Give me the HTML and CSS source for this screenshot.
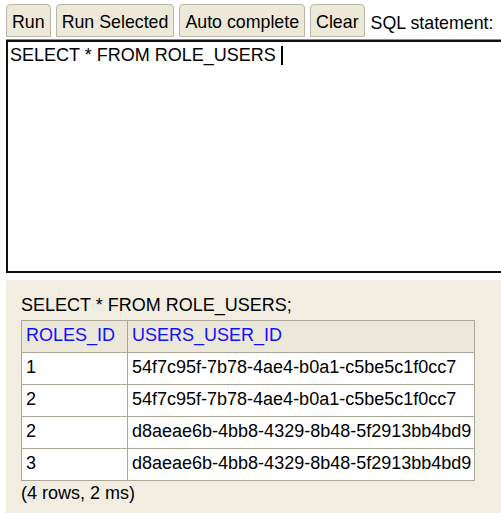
FILE: index.html
```html
<!DOCTYPE html>
<html>
<head>
<meta charset="utf-8">
<link rel="stylesheet" href="styles.css">
</head>
<body>
<div class="page">
  <div class="toolbar">
    <button class="btn">Run</button>
    <button class="btn">Run Selected</button>
    <button class="btn">Auto complete</button>
    <button class="btn">Clear</button>
    <span class="label">SQL statement:</span>
  </div>
  <div class="editor">SELECT * FROM ROLE_USERS <span class="caret"></span></div>
  <div class="result">
    <div class="stmt">SELECT * FROM ROLE_USERS;</div>
    <table class="grid">
      <tr><th class="c1">ROLES_ID</th><th>USERS_USER_ID</th></tr>
      <tr><td>1</td><td>54f7c95f-7b78-4ae4-b0a1-c5be5c1f0cc7</td></tr>
      <tr><td>2</td><td>54f7c95f-7b78-4ae4-b0a1-c5be5c1f0cc7</td></tr>
      <tr><td>2</td><td>d8aeae6b-4bb8-4329-8b48-5f2913bb4bd9</td></tr>
      <tr><td>3</td><td>d8aeae6b-4bb8-4329-8b48-5f2913bb4bd9</td></tr>
    </table>
    <div class="stats">(4 rows, 2 ms)</div>
  </div>
</div>
</body>
</html>
```

FILE: styles.css
```css
html, body {
  margin: 0;
  padding: 0;
  background: #ffffff;
  overflow: hidden;
}
body {
  font-family: "Liberation Sans", Arial, sans-serif;
  font-size: 18px;
  color: #000;
}
.page {
  padding: 4px 0 0 6px;
}
.toolbar {
  display: flex;
  align-items: flex-end;
  gap: 5px;
  height: 33px;
}
.btn {
  font-family: inherit;
  font-size: 17.8px;
  color: #000;
  background: #ece9d8;
  border: 1px solid #b9b6a8;
  border-radius: 4px 4px 0 0;
  padding: 7px 5px 3px;
  line-height: 21px;
  height: 33px;
  margin: 0;
}
.label {
  margin-left: 1px;
  line-height: 21px;
  padding-bottom: 3px;
  font-size: 17.8px;
}
.editor {
  margin-top: 3px;
  height: 225px;
  background: #fff;
  border: 2px solid #111;
  border-right: none;
  box-shadow: 0 -1px 0 #8a8a8a;
  padding: 3px 2px 2px;
  line-height: 21px;
  white-space: pre;
  box-sizing: border-box;
  height: 233px;
}
.caret {
  display: inline-block;
  width: 0;
  height: 19px;
  border-left: 2px solid #000;
  vertical-align: -4px;
}
.result {
  margin-top: 7px;
  background: #f1eee1;
  padding: 15px 15px 11px;
  line-height: 21px;
}
.stmt {
  margin-bottom: 4px;
}
.grid {
  border-collapse: collapse;
  border: 1px solid #aca899;
}
.grid th, .grid td {
  border: 1px solid #aca899;
  padding: 4px 3px 6px 4px;
  line-height: 21px;
  text-align: left;
  font-weight: normal;
  background: #fff;
}
.grid th {
  background: #ebe8d9;
  color: #1010ff;
}
.grid .c1 {
  width: 98px;
}
.stats {
  margin-top: 2px;
}
```
